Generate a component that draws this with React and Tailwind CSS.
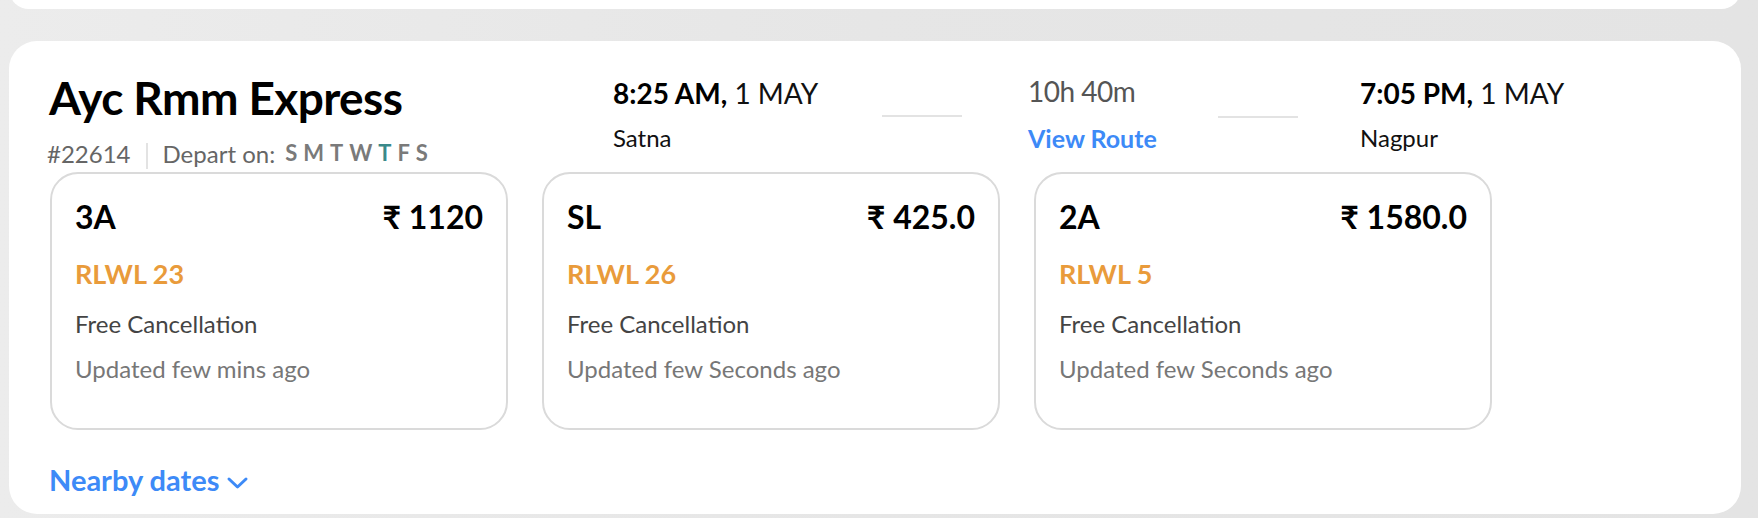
import React from 'react';

const fares = [
  { cls: '3A', price: '₹ 1120', status: 'RLWL 23', updated: 'Updated few mins ago' },
  { cls: 'SL', price: '₹ 425.0', status: 'RLWL 26', updated: 'Updated few Seconds ago' },
  { cls: '2A', price: '₹ 1580.0', status: 'RLWL 5', updated: 'Updated few Seconds ago' },
];

const days = ['S', 'M', 'T', 'W', 'T', 'F', 'S'];

function FareCard({ cls, price, status, updated }) {
  return (
    <div className="w-[458px] h-[258px] border-2 border-[#dadada] rounded-[28px] pt-[27px] px-[23px]">
      <div className="flex items-start justify-between">
        <span className="text-[32px] leading-none font-bold text-black">{cls}</span>
        <span className="text-[32px] leading-none font-bold text-black">{price}</span>
      </div>
      <div className="mt-[27px] text-[27px] leading-none font-bold text-[#e99b3b]">{status}</div>
      <div className="mt-[25px] text-[24px] leading-none text-[#444]">Free Cancellation</div>
      <div className="mt-[21px] text-[24px] leading-none text-[#777]">{updated}</div>
    </div>
  );
}

function Stop({ time, date, place }) {
  return (
    <div className="mt-[4px]">
      <div className="text-[28px] leading-none text-[#111]">
        <span className="font-bold text-black">{time},</span> {date}
      </div>
      <div className="mt-[19px] text-[24px] leading-none text-[#111]">{place}</div>
    </div>
  );
}

export default function App() {
  return (
    <div className="h-[518px] w-full overflow-hidden bg-gradient-to-r from-[#ececec] via-[#e6e6e6] to-[#e4e4e4] font-['Lato','Liberation_Sans',sans-serif]">
      {/* previous result card peeking from above */}
      <div className="h-[40px] -mt-[31px] ml-[9px] mr-[17px] rounded-[30px] bg-white" />

      <div className="mt-[32px] ml-[9px] mr-[17px] h-[473px] rounded-[28px] bg-white pt-[34px] pl-[40px]">
        <div className="flex items-start">
          <div className="w-[564px]">
            <h1 className="text-[46px] leading-none font-bold tracking-[-0.6px] text-black">Ayc Rmm Express</h1>
            <div className="mt-[21px] -ml-[2px] flex items-start">
              <span className="text-[24px] leading-none text-[#666]">#22614</span>
              <div className="mx-[15px] mt-[1px] h-[26px] w-[2px] bg-[#e3e3e3]" />
              <span className="text-[24px] leading-none text-[#666]">Depart on:</span>
              <span className="ml-[10px] text-[22px] leading-none font-bold tracking-[6px] text-[#7a7a7a]">
                {days.map((d, i) => (
                  <span key={i} className={i === 4 ? 'text-[#3a8a8a]' : ''}>{d}</span>
                ))}
              </span>
            </div>
          </div>

          <div className="w-[269px]">
            <Stop time="8:25 AM" date="1 MAY" place="Satna" />
          </div>
          <div className="mt-[40px] h-[2px] w-[80px] bg-[#e3e3e3]" />

          <div className="ml-[66px] w-[190px] mt-[2px]">
            <div className="text-[28px] leading-none tracking-[-0.5px] text-[#555]">10h 40m</div>
            <div className="mt-[21px] text-[25px] leading-none font-bold text-[#3d8af7]">View Route</div>
          </div>
          <div className="mt-[41px] h-[2px] w-[80px] bg-[#e3e3e3]" />

          <div className="ml-[62px]">
            <Stop time="7:05 PM" date="1 MAY" place="Nagpur" />
          </div>
        </div>

        <div className="mt-[3px] pl-[1px] flex gap-[34px]">
          {fares.map((f) => (
            <FareCard key={f.cls} {...f} />
          ))}
        </div>

        <button className="mt-[35px] flex items-center gap-[7px] text-[29px] leading-none font-bold text-[#3d8af7]">
          Nearby dates
          <svg width="23" height="14" viewBox="0 0 23 14" fill="none" className="mt-[6px]">
            <polyline points="3,3 11.5,11 20,3" stroke="#3d8af7" strokeWidth="3" strokeLinecap="round" strokeLinejoin="round" />
          </svg>
        </button>
      </div>
    </div>
  );
}
